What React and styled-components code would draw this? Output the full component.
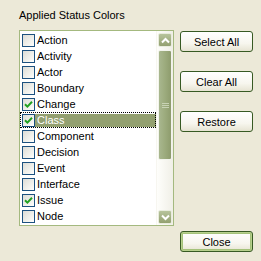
import React, { useState } from 'react'
import styled, { createGlobalStyle, css } from 'styled-components'

const GlobalStyle = createGlobalStyle`
    html, body {
        margin: 0;
        padding: 0;
        background: #ece9d8;
    }
    body {
        font-family: Tahoma, "Liberation Sans", "DejaVu Sans", sans-serif;
        font-size: 11px;
        color: #000;
    }
`

const ITEMS = [
    { name: 'Action', checked: false },
    { name: 'Activity', checked: false },
    { name: 'Actor', checked: false },
    { name: 'Boundary', checked: false },
    { name: 'Change', checked: true },
    { name: 'Class', checked: true },
    { name: 'Component', checked: false },
    { name: 'Decision', checked: false },
    { name: 'Event', checked: false },
    { name: 'Interface', checked: false },
    { name: 'Issue', checked: true },
    { name: 'Node', checked: false },
]

function CheckMark() {
    return (
        <svg width="9" height="9" viewBox="0 0 9 9">
            <path d="M1 4.2 L3.4 6.6 L8 1.8" stroke="#21a121" strokeWidth="2" fill="none" />
        </svg>
    )
}

function Chevron({ down }) {
    return (
        <svg width="9" height="7" viewBox="0 0 9 7">
            <path
                d={down ? 'M1 1.5 L4.5 5 L8 1.5' : 'M1 5.5 L4.5 2 L8 5.5'}
                stroke="#fff"
                strokeWidth="2"
                fill="none"
            />
        </svg>
    )
}

function App() {
    const [items, setItems] = useState(ITEMS);
    const [selected, setSelected] = useState('Class');

    const toggle = (name) => {
        setItems(items.map((it) => it.name === name ? { ...it, checked: !it.checked } : it));
    }

    return (
        <Dialog>
            <GlobalStyle />
            <LeftColumn>
                <Title>Applied Status Colors</Title>
                <ListBox>
                    <List>
                        {items.map((it) => (
                            <Row key={it.name} $focused={selected === it.name} onClick={() => setSelected(it.name)}>
                                <CheckBox onClick={() => toggle(it.name)}>
                                    {it.checked && <CheckMark />}
                                </CheckBox>
                                <Label $selected={selected === it.name}>{it.name}</Label>
                            </Row>
                        ))}
                    </List>
                    <ScrollBar>
                        <ScrollButton><Chevron /></ScrollButton>
                        <Track>
                            <Thumb>
                                <Grip />
                            </Thumb>
                        </Track>
                        <ScrollButton><Chevron down /></ScrollButton>
                    </ScrollBar>
                </ListBox>
            </LeftColumn>
            <RightColumn>
                <ButtonGroup>
                    <Button>Select All</Button>
                    <Button>Clear All</Button>
                    <Button>Restore</Button>
                </ButtonGroup>
                <Button $default>Close</Button>
            </RightColumn>
        </Dialog>
    )
}

export default App

const Dialog = styled.div`
    width: 261px;
    height: 261px;
    box-sizing: border-box;
    padding: 9px 8px 9px 19px;
    display: flex;
    gap: 6px;
`

const LeftColumn = styled.div`
    display: flex;
    flex-direction: column;
    width: 156px;
`

const Title = styled.div`
    height: 13px;
    line-height: 13px;
    margin-bottom: 8px;
    white-space: nowrap;
`

const ListBox = styled.div`
    height: 196px;
    box-sizing: border-box;
    border: 1px solid #a4b97f;
    background: #fff;
    display: flex;
`

const List = styled.div`
    flex: 1;
    padding-top: 1px;
    display: flex;
    flex-direction: column;
`

const Row = styled.div`
    height: 16px;
    display: flex;
    align-items: center;
    box-sizing: border-box;
    padding-left: 2px;
    cursor: default;
    ${(p) => p.$focused && css`
        outline: 1px dotted #000;
        outline-offset: -1px;
    `}
`

const CheckBox = styled.div`
    width: 13px;
    height: 13px;
    box-sizing: border-box;
    border: 1px solid #1c5180;
    background: linear-gradient(135deg, #dcdcd7 0%, #f4f4f0 70%, #fff 100%);
    display: flex;
    align-items: center;
    justify-content: center;
    flex-shrink: 0;
`

const Label = styled.span`
    flex: 1;
    height: 13px;
    line-height: 13px;
    padding-left: 2px;
    margin-left: 0;
    white-space: nowrap;
    ${(p) => p.$selected && css`
        background: #93a070;
        color: #fff;
    `}
`

const ScrollBar = styled.div`
    width: 17px;
    display: flex;
    flex-direction: column;
    padding: 2px 1px 1px 1px;
    box-sizing: border-box;
    background: linear-gradient(to right, #fefefb, #f0efe7);
    border-left: 1px solid #f7f6f0;
`

const ScrollButton = styled.div`
    height: 14px;
    box-sizing: border-box;
    border: 1px solid #e8ecdd;
    border-radius: 2px;
    background: linear-gradient(to bottom, #b7c49c, #93a070);
    display: flex;
    align-items: center;
    justify-content: center;
    flex-shrink: 0;
`

const Track = styled.div`
    flex: 1;
    padding: 3px 0 50px 0;
    display: flex;
    flex-direction: column;
`

const Thumb = styled.div`
    height: 110px;
    box-sizing: border-box;
    border: 1px solid #f2f4ec;
    border-radius: 2px;
    background: linear-gradient(to right, #a9b78f, #9cab7d 50%, #8e9c6d);
    display: flex;
    align-items: center;
    justify-content: center;
`

const Grip = styled.div`
    width: 7px;
    height: 5px;
    background: repeating-linear-gradient(to bottom, #c8d2b4 0 1px, transparent 1px 2px);
`

const RightColumn = styled.div`
    display: flex;
    flex-direction: column;
    justify-content: space-between;
    padding-top: 22px;
    width: 73px;
`

const ButtonGroup = styled.div`
    display: flex;
    flex-direction: column;
    gap: 19px;
`

const Button = styled.button`
    width: 73px;
    height: 21px;
    box-sizing: border-box;
    padding: 0;
    border: 1px solid #375a23;
    border-radius: 3px;
    background: linear-gradient(to bottom, #ffffff 0%, #f7f6ee 60%, #e6e3d2 100%);
    font-family: Tahoma, "Liberation Sans", "DejaVu Sans", sans-serif;
    font-size: 11px;
    color: #000;
    ${(p) => p.$default && css`
        box-shadow: inset 0 0 0 1px #b7d08d, inset 0 0 0 2px #a4c27a;
    `}
`
